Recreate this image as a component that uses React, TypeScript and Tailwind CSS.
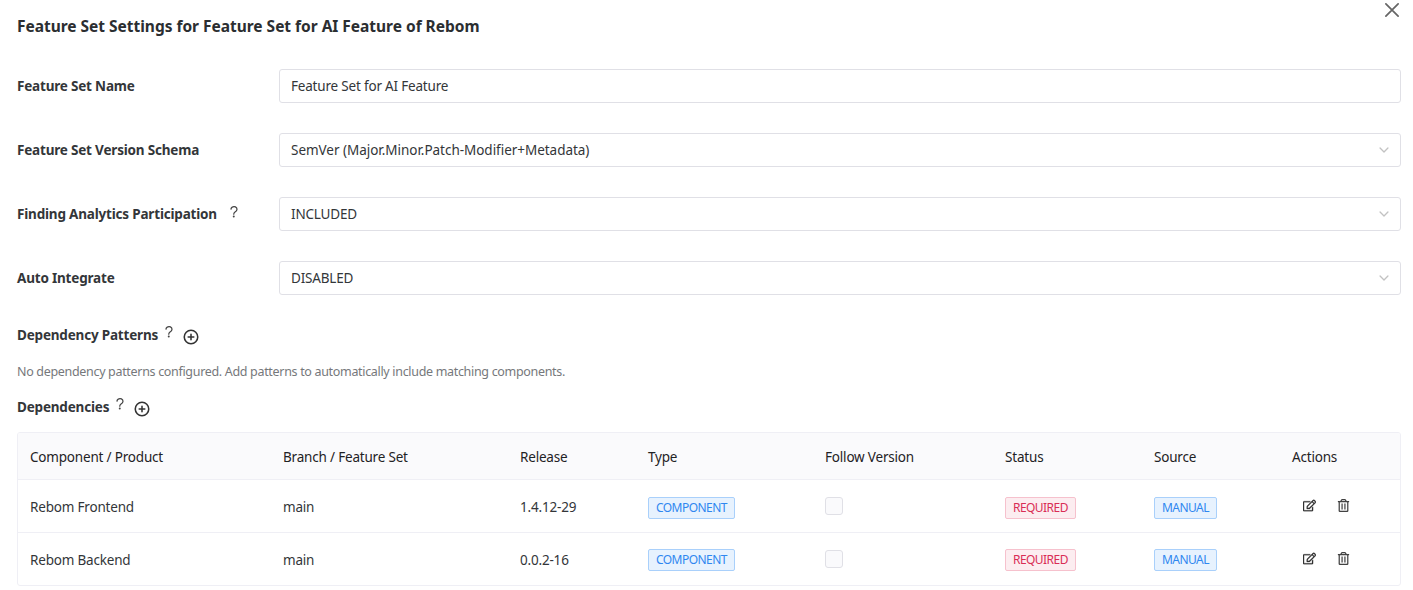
import { FaRegEdit, FaRegTrashAlt } from "react-icons/fa";
import { IoAddCircleOutline, IoHelpOutline, IoCloseOutline, IoChevronDownOutline } from "react-icons/io5";

const colWidths = ["w-[253px]", "w-[237px]", "w-[128px]", "w-[177px]", "w-[180px]", "w-[149px]", "w-[138px]", "w-[120px]"];
const heads = ["Component / Product", "Branch / Feature Set", "Release", "Type", "Follow Version", "Status", "Source", "Actions"];
const rows = [
  ["Rebom Frontend", "main", "1.4.12-29"],
  ["Rebom Backend", "main", "0.0.2-16"],
];

function Tag({ color, children }: { color: "blue" | "red"; children: string }) {
  return (
    <span
      className={
        "inline-flex h-[22px] items-center rounded-[2px] border px-[7px] text-[12px] leading-none tracking-[-0.55px] " +
        (color === "blue"
          ? "border-[#a9d0fb] bg-[#e7f2fe] text-[#2f87f0]"
          : "border-[#f6c1cd] bg-[#fcedf0] text-[#d92d55]")
      }
    >
      {children}
    </span>
  );
}

function Field({ label, value, help, select, wide }: { label: string; value: string; help?: boolean; select?: boolean; wide?: boolean }) {
  return (
    <div className="flex h-[34px] items-center">
      <div className="flex w-[262px] shrink-0 items-center text-[13.5px] font-bold text-[#333639]">
        {label}
        {help && <IoHelpOutline className="ml-[9px] mb-[5px] h-[16px] w-[16px] text-[#444]" />}
      </div>
      <div className="flex h-[34px] flex-1 items-center justify-between rounded-[3px] border border-[#e0e0e6] pl-[11px] pr-[9px] text-[#333639]">
        <span className={wide ? "tracking-[-0.03px]" : ""}>{value}</span>
        {select && <IoChevronDownOutline className="h-[14px] w-[14px] text-[#c2c2c2]" />}
      </div>
    </div>
  );
}

function SectionHead({ label }: { label: string }) {
  return (
    <div className="flex items-center text-[13.5px] font-bold text-[#333639]">
      {label}
      <IoHelpOutline className="ml-[3px] mb-[7px] h-[16px] w-[16px] text-[#444]" />
      <IoAddCircleOutline className="ml-[5px] mt-[2px] h-[18px] w-[18px] text-[#333] [&_*]:stroke-[44px]" />
    </div>
  );
}

export default function App() {
  return (
    <div className="relative h-[590px] w-full overflow-hidden bg-white pl-[17px] pr-[12px] pt-[15px] font-['Noto_Sans',sans-serif] text-[13.5px] tracking-[-0.19px] text-[#333639]">
      <IoCloseOutline className="absolute right-[7px] -top-[4px] h-[28px] w-[28px] text-[#666]" />
      <h1 className="h-[22px] text-[15.5px] font-bold leading-[22px] tracking-[-0.02px] text-[#2b2e31]">
        Feature Set Settings for Feature Set for AI Feature of Rebom
      </h1>
      <div className="mt-[32px] flex flex-col gap-[30px]">
        <Field label="Feature Set Name" value="Feature Set for AI Feature" />
        <Field label="Feature Set Version Schema" value="SemVer (Major.Minor.Patch-Modifier+Metadata)" select wide />
        <Field label="Finding Analytics Participation" value="INCLUDED" help select />
        <Field label="Auto Integrate" value="DISABLED" select />
      </div>
      <div className="mt-[29px] h-[28px]">
        <SectionHead label="Dependency Patterns" />
      </div>
      <p className="mt-[10px] h-[20px] text-[12.5px] leading-[20px] tracking-[-0.32px] text-[#76787b]">
        No dependency patterns configured. Add patterns to automatically include matching components.
      </p>
      <div className="mt-[14px] h-[26px]">
        <SectionHead label="Dependencies" />
      </div>
      <div className="mt-[10px] overflow-hidden rounded-[3px] border border-[#efeff5]">
        <table className="w-full table-fixed border-collapse">
          <colgroup>
            {colWidths.map((w) => (
              <col key={w} className={w} />
            ))}
          </colgroup>
          <thead>
            <tr className="h-[46px] border-b border-[#efeff5] bg-[#fafafc]">
              {heads.map((h) => (
                <th key={h} className="px-[12px] pt-[2px] text-left font-normal text-[#1f2225]">
                  {h}
                </th>
              ))}
            </tr>
          </thead>
          <tbody>
            {rows.map((r, i) => {
              const cell = "px-[12px] " + (i === 0 ? "pt-[4px]" : "pt-[2px]");
              return (
                <tr key={r[0]} className={"h-[53px] " + (i === 0 ? "border-b border-[#efeff5]" : "")}>
                  {r.map((c, j) => (
                    <td key={j} className={cell}>
                      {c}
                    </td>
                  ))}
                  <td className={cell}>
                    <Tag color="blue">COMPONENT</Tag>
                  </td>
                  <td className="px-[12px] pt-[2px]">
                    <span className="mb-[2px] block h-[18px] w-[18px] rounded-[3px] border border-[#e0e0e6] bg-[#fafafc]" />
                  </td>
                  <td className={cell}>
                    <Tag color="red">REQUIRED</Tag>
                  </td>
                  <td className={cell}>
                    <Tag color="blue">MANUAL</Tag>
                  </td>
                  <td className="px-[12px] pt-[2px]">
                    <div className="mb-[3px] flex items-center gap-[21px] pl-[11px] text-[#333]">
                      <FaRegEdit className="h-[13px] w-[13px] stroke-current stroke-[10px]" />
                      <FaRegTrashAlt className="h-[13px] w-[13px] text-[#444] stroke-current stroke-[2px]" />
                    </div>
                  </td>
                </tr>
              );
            })}
          </tbody>
        </table>
      </div>
    </div>
  );
}
